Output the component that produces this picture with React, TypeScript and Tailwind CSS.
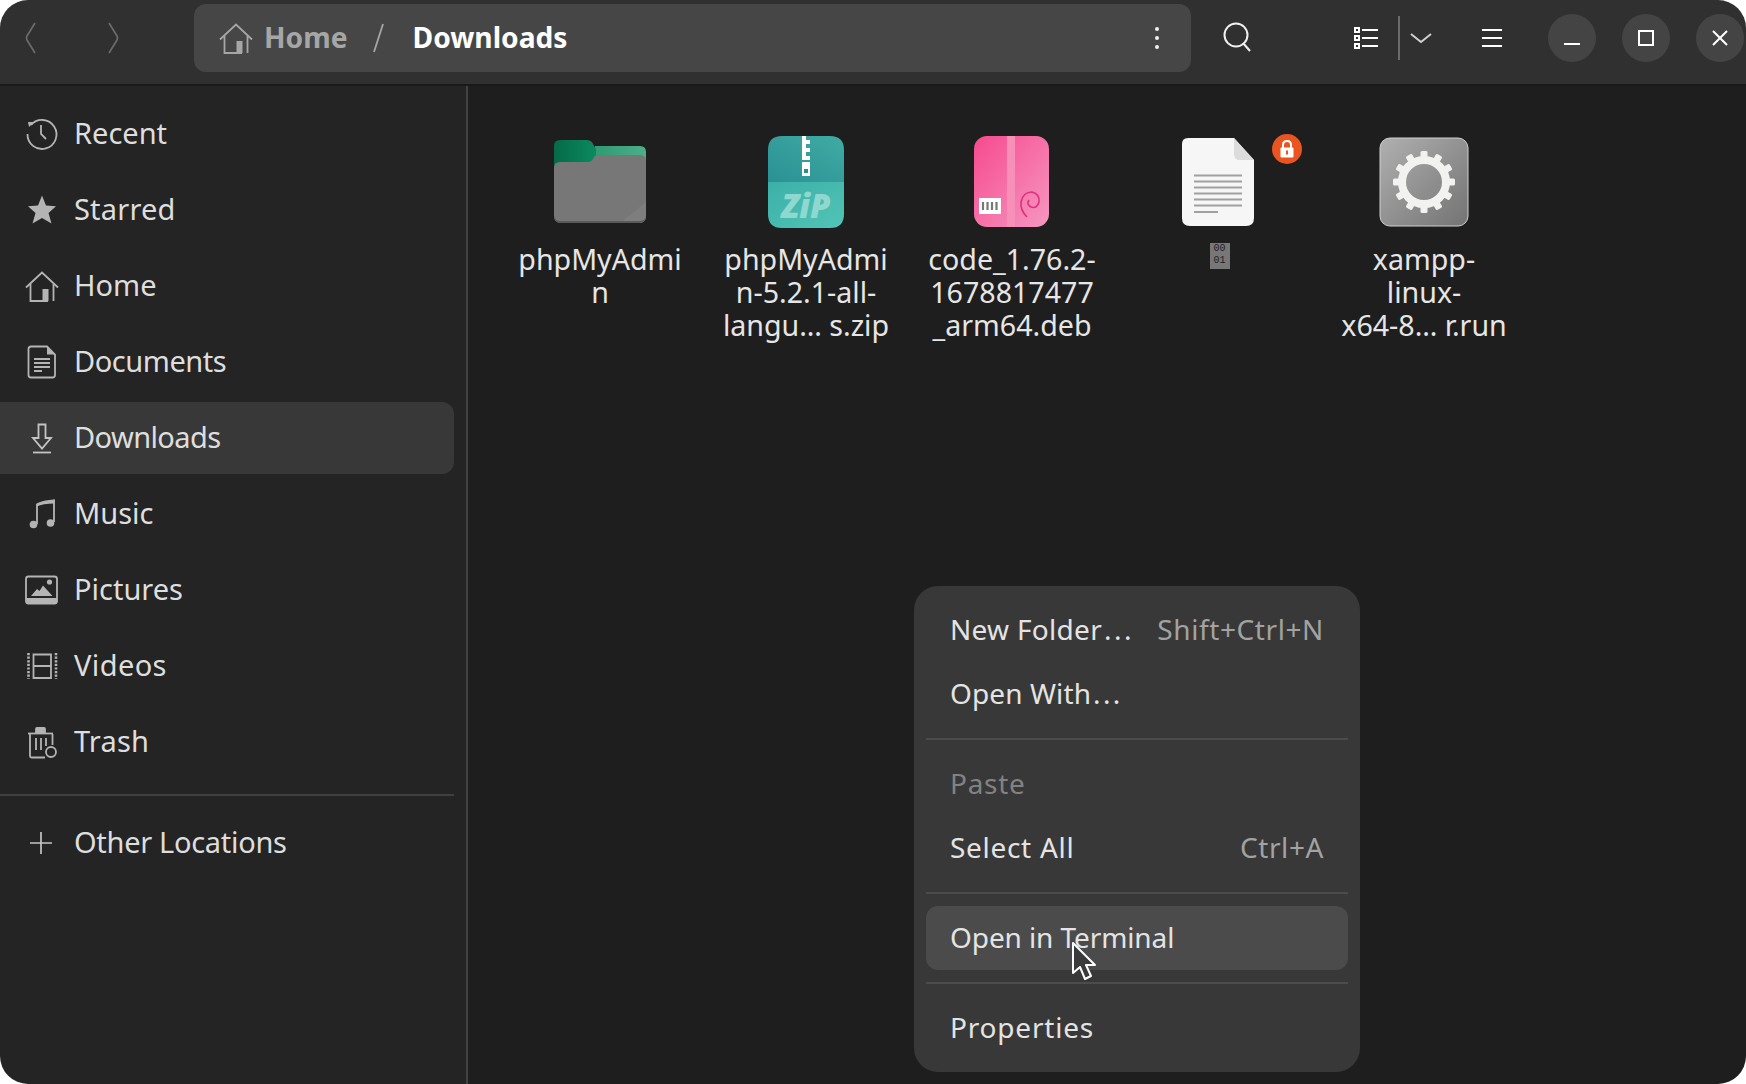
const font = { fontFamily: '"Noto Sans", sans-serif' };

const Recent = () => (
  <svg width="36" height="36" viewBox="0 0 36 36" fill="none" stroke="#b4b4b4" strokeWidth="1.8">
    <path d="M7 9 A14.5 14.5 0 1 1 3.5 18" />
    <path d="M4 6 L10 6 L5 11 Z" fill="#b4b4b4" stroke="none" />
    <path d="M17 9 V18 L22 23" />
  </svg>
);

const Star = () => (
  <svg width="36" height="36" viewBox="0 0 36 36" fill="#b4b4b4">
    <path d="M18 3.5 L22 13.5 L32 14.3 L24.5 21 L27.5 31.5 L18 26 L8.5 31.5 L11.5 21 L4 14.3 L14 13.5 Z" />
  </svg>
);

const HomeIcon = ({ color = "#b4b4b4" }: { color?: string }) => (
  <svg width="36" height="36" viewBox="0 0 36 36" fill="none" stroke={color} strokeWidth="1.8">
    <path d="M2 19.5 L18 4.5 L34 19.5" />
    <path d="M6.5 16 V33 H24 M29.5 16 V33" />
    <path d="M18.5 21 H24.5 V33 H18.5 Z" fill={color} stroke="none" />
  </svg>
);

const Documents = () => (
  <svg width="36" height="36" viewBox="0 0 36 36" fill="none" stroke="#b4b4b4" strokeWidth="1.8">
    <path d="M7 2.5 H23 L31 10.5 V31 Q31 33.5 28.5 33.5 H7 Q4.5 33.5 4.5 31 V5 Q4.5 2.5 7 2.5 Z" />
    <path d="M23 3 L30.5 10.5 H23 Z" fill="#b4b4b4" stroke="none" />
    <path d="M10 15 H26 M10 19 H26 M10 23 H26 M10 27 H18" />
  </svg>
);

const DownloadIcon = () => (
  <svg width="36" height="36" viewBox="0 0 36 36" fill="none" stroke="#c4c4c4" strokeWidth="1.8">
    <path d="M14.5 4.5 H21.5 V18 H27 L18 28.5 L9 18 H14.5 Z" />
    <path d="M9 32.5 H27" />
  </svg>
);

const MusicIcon = () => (
  <svg width="36" height="36" viewBox="0 0 36 36" fill="none" stroke="#b4b4b4" strokeWidth="1.8">
    <path d="M13 28 V8 M30 26 V3.5" />
    <path d="M12.5 7.5 Q19 4 30.5 3.5 V7.5 Q19 7.5 12.5 10.5 Z" fill="#b4b4b4" stroke="none" />
    <circle cx="9.5" cy="28.5" r="3.8" fill="#b4b4b4" stroke="none" />
    <circle cx="26.5" cy="27" r="3.8" fill="#b4b4b4" stroke="none" />
  </svg>
);

const PicturesIcon = () => (
  <svg width="36" height="36" viewBox="0 0 36 36" fill="none" stroke="#b4b4b4" strokeWidth="1.8">
    <rect x="2" y="4.5" width="31" height="27" rx="2.5" />
    <path d="M2 26 H33 V29 Q33 32 30 32 H5 Q2 32 2 29 Z" fill="#b4b4b4" stroke="none" />
    <path d="M7 24 L13 17 L15.5 19 L19 13.5 L28.5 24 Z" fill="#b4b4b4" stroke="none" />
    <circle cx="25.5" cy="10" r="2.6" fill="#b4b4b4" stroke="none" />
  </svg>
);

const VideosIcon = () => (
  <svg width="36" height="36" viewBox="0 0 36 36" fill="none" stroke="#b4b4b4" strokeWidth="1.8">
    <path d="M9.5 6.5 H27 V30 H9.5 Z M9.5 18 H27" />
    <path d="M4.5 5 V31 M32 5 V31" strokeWidth="2.6" strokeDasharray="2.2 1.4" />
  </svg>
);

const TrashIcon = () => (
  <svg width="36" height="36" viewBox="0 0 36 36" fill="none" stroke="#b4b4b4" strokeWidth="1.8">
    <path d="M4 9.5 H29" />
    <path d="M12 9 V5 Q12 4 13 4 H20 Q21 4 21 5 V9" fill="#b4b4b4" />
    <path d="M6 10 V32 Q6 33.5 7.5 33.5 H21 M28.5 10 V21" />
    <path d="M12 14 V26 M17 14 V26 M22 14 V22" />
    <circle cx="27" cy="28" r="5" />
  </svg>
);

const PlusIcon = () => (
  <svg width="36" height="36" viewBox="0 0 36 36" fill="none" stroke="#c4c4c4" strokeWidth="1.7">
    <path d="M6 18 H28 M17 7 V29" />
  </svg>
);

const Back = ({ flip }: { flip?: boolean }) => (
  <svg width="12" height="32" viewBox="0 0 12 32" fill="none" stroke="#6b6b6b" strokeWidth="1.7">
    <path d={flip ? "M2 1 L10 14 Q11 16 10 18 L2 31" : "M10 1 L2 14 Q1 16 2 18 L10 31"} />
  </svg>
);

const Sidebar = () => {
  const items = [
    { label: "Recent", icon: <Recent /> },
    { label: "Starred", icon: <Star />, tracking: "tracking-[0.2px]" },
    { label: "Home", icon: <HomeIcon /> },
    { label: "Documents", icon: <Documents />, tracking: "tracking-[-0.45px]" },
    { label: "Downloads", icon: <DownloadIcon />, tracking: "tracking-[-0.6px]", active: true },
    { label: "Music", icon: <MusicIcon /> },
    { label: "Pictures", icon: <PicturesIcon /> },
    { label: "Videos", icon: <VideosIcon />, tracking: "tracking-[0.4px]" },
    { label: "Trash", icon: <TrashIcon />, tracking: "tracking-[0.2px]" },
  ];

  return (
    <aside className="w-[468px] shrink-0 bg-[#242424] border-r-2 border-[#424242] pt-3 pr-3">
      <div className="flex flex-col gap-1">
        {items.map((item) => (
          <div
            key={item.label}
            className={`h-[72px] flex items-center gap-[14px] pl-6 rounded-r-xl text-[29px] text-[#dedede] ${
              item.active ? "bg-[#383838]" : ""
            }`}
          >
            {item.icon}
            <span className={`-mt-0.5 ${item.tracking ?? ""}`}>{item.label}</span>
          </div>
        ))}
      </div>
      <div className="h-0.5 bg-[#404040] mt-4 mb-[11px]" />
      <div className="h-[72px] flex items-center gap-[14px] pl-6 text-[29px] text-[#dedede]">
        <PlusIcon />
        <span className="-mt-0.5 tracking-[-0.3px]">Other Locations</span>
      </div>
    </aside>
  );
};

const FolderFile = () => (
  <svg width="100" height="100" viewBox="0 0 100 100">
    <defs>
      <linearGradient id="folderTab" x1="0" y1="0" x2="1" y2="0">
        <stop offset="0" stopColor="#056a48" />
        <stop offset="1" stopColor="#0b8a60" />
      </linearGradient>
      <linearGradient id="folderBack" x1="0" y1="0" x2="1" y2="0">
        <stop offset="0" stopColor="#2f9a74" />
        <stop offset="1" stopColor="#4cae8b" />
      </linearGradient>
    </defs>
    <path d="M45 16 H90 Q96 16 96 22 V40 H45 Z" fill="url(#folderBack)" />
    <path d="M4 16 Q4 10 10 10 H37 Q42 10 44 16 L46 19 V40 H4 Z" fill="url(#folderTab)" />
    <path d="M4 38 Q4 32 10 32 H38 Q42 32 44 27 Q45 25 48 25 H90 Q96 25 96 31 V86 Q96 93 89 93 H11 Q4 93 4 86 Z" fill="#777777" />
    <path d="M96 72 V86 Q96 93 89 93 H70 Z" fill="#7e7e7e" />
    <path d="M4 85 V86 Q4 93 11 93 H89 Q96 93 96 86 V85 Q96 91 89 91 H11 Q4 91 4 85 Z" fill="#5a5a5a" />
  </svg>
);

const ZipFile = () => (
  <svg width="100" height="100" viewBox="0 0 100 100">
    <defs>
      <linearGradient id="zipTop" x1="0" y1="1" x2="1" y2="0">
        <stop offset="0" stopColor="#2a9194" />
        <stop offset="1" stopColor="#40aba4" />
      </linearGradient>
      <linearGradient id="zipBottom" x1="0" y1="0" x2="1" y2="1">
        <stop offset="0" stopColor="#3cb0a8" />
        <stop offset="1" stopColor="#52c4b6" />
      </linearGradient>
    </defs>
    <path d="M12 20 Q12 6 26 6 H74 Q88 6 88 20 V52 H12 Z" fill="url(#zipTop)" />
    <path d="M12 52 H88 V84 Q88 98 74 98 H26 Q12 98 12 84 Z" fill="url(#zipBottom)" />
    <path d="M46 6 H50 V10 H54 V14 H50 V18 H46 Z M46 22 H50 V26 H54 V30 H46 Z" fill="#ffffff" />
    <path d="M46 18 H54 V22 H46 Z" fill="#ffffff" />
    <rect x="46" y="32" width="8" height="14" fill="#ffffff" />
    <rect x="48" y="39" width="4" height="4" fill="#2a8f92" />
    <text x="50" y="88" textAnchor="middle" fontFamily="Noto Sans, sans-serif" fontStyle="italic" fontWeight="900" fontSize="33" fill="#8fd8cf">
      ZiP
    </text>
  </svg>
);

const DebFile = () => (
  <svg width="100" height="100" viewBox="0 0 100 100">
    <defs>
      <linearGradient id="debBody" x1="0" y1="0" x2="1" y2="1">
        <stop offset="0" stopColor="#f74a8e" />
        <stop offset="1" stopColor="#f597c0" />
      </linearGradient>
    </defs>
    <rect x="12" y="6" width="75" height="91" rx="13" fill="url(#debBody)" />
    <rect x="45" y="6" width="8" height="91" fill="#f790b8" />
    <rect x="17" y="68" width="22" height="16" fill="#ffffff" />
    <path d="M21 72 V80 M25.5 72 V80 M30 72 V80 M34.5 72 V80" stroke="#777777" strokeWidth="2.2" />
    <path d="M65 87 Q58 80 59 72 Q61 62 70 62 Q78 64 77 72 Q75 79 69 77 Q64 74 67 70" fill="none" stroke="#df2f7d" strokeWidth="1.6" />
  </svg>
);

const DocFile = () => (
  <svg width="100" height="100" viewBox="0 0 100 100">
    <path d="M20 8 H66 L86 30 V88 Q86 96 78 96 H22 Q14 96 14 88 V14 Q14 8 20 8 Z" fill="#f6f6f6" />
    <path d="M66 8 L86 30 H72 Q66 30 66 24 Z" fill="#dcdcdc" />
    <path d="M26 45.5 H74 M26 51.5 H74 M26 57.5 H74 M26 63.5 H74 M26 69.5 H74 M26 75.5 H74 M26 82 H50" stroke="#a0a0a0" strokeWidth="2" />
  </svg>
);

const RunFile = () => {
  const teeth = Array.from({ length: 12 }, (_, i) => i * 30);
  return (
    <svg width="100" height="100" viewBox="0 0 100 100">
      <defs>
        <linearGradient id="runBody" x1="0" y1="0" x2="1" y2="1">
          <stop offset="0" stopColor="#b0b0b0" />
          <stop offset="1" stopColor="#737373" />
        </linearGradient>
      </defs>
      <rect x="6" y="8" width="88" height="88" rx="10" fill="url(#runBody)" stroke="#cfcfcf" strokeWidth="1" />
      <circle cx="50" cy="52" r="22" fill="none" stroke="#f2f2f0" strokeWidth="8" />
      {teeth.map((deg) => (
        <rect key={deg} x="46.5" y="21" width="7" height="9" rx="1.5" fill="#f2f2f0" transform={`rotate(${deg} 50 52)`} />
      ))}
    </svg>
  );
};

const LockBadge = () => (
  <div className="absolute left-[157px] top-[4px] w-[30px] h-[30px] rounded-full bg-[#e95420] flex items-center justify-center">
    <svg width="16" height="20" viewBox="0 0 16 20">
      <path d="M4 9 V6 Q4 2 8 2 Q12 2 12 6 V9" fill="none" stroke="#ffffff" strokeWidth="2" />
      <rect x="1.5" y="8.5" width="13" height="10" rx="1" fill="#ffffff" />
      <rect x="7" y="11.5" width="2" height="4" fill="#e95420" />
    </svg>
  </div>
);

const files = [
  { icon: <FolderFile />, lines: ["phpMyAdmi", "n"] },
  { icon: <ZipFile />, lines: ["phpMyAdmi", "n-5.2.1-all-", "langu… s.zip"] },
  { icon: <DebFile />, lines: ["code_1.76.2-", "1678817477", "_arm64.deb"] },
  { icon: <DocFile />, lines: [], badge: true, tofu: true },
  { icon: <RunFile />, lines: ["xampp-", "linux-", "x64-8… r.run"] },
];

const FileGrid = () => (
  <main className="flex-1 bg-[#1e1e1e] pt-11 pl-[29px]">
    <div className="flex">
      {files.map((file, i) => (
        <div key={i} className="w-[206px] relative flex flex-col items-center">
          {file.icon}
          {file.badge && <LockBadge />}
          <div className="mt-3 text-[28.6px] leading-[33px] text-[#e6e6e6] text-center whitespace-nowrap">
            {file.lines.map((line) => (
              <div key={line}>{line}</div>
            ))}
            {file.tofu && (
              <div className="mt-px ml-[3px] w-5 h-[26px] bg-[#777777] text-[#222222] font-['Liberation_Mono'] text-[10px] leading-[12px] text-center">
                00
                <br />
                01
              </div>
            )}
          </div>
        </div>
      ))}
    </div>
  </main>
);

const Header = () => (
  <header className="h-[86px] shrink-0 bg-[#303030] border-b-2 border-[#1a1a1a] flex items-center pb-2 text-white">
    <div className="w-[62px] flex justify-center">
      <Back />
    </div>
    <div className="ml-5 w-[61px] flex justify-center">
      <Back flip />
    </div>
    <div className="ml-[51px] w-[997px] h-[68px] rounded-xl bg-[#464646] flex items-center pl-6 pr-[31px]">
      <HomeIcon color="#a6a6a6" />
      <span className="ml-2.5 -mt-0.5 text-[28.2px] font-bold text-[#a6a6a6]">Home</span>
      <svg className="ml-[23px]" width="14" height="32" viewBox="0 0 14 32" fill="none" stroke="#a6a6a6" strokeWidth="1.8">
        <path d="M12 2 L3 30" />
      </svg>
      <span className="ml-7 -mt-0.5 text-[28.2px] font-bold text-white">Downloads</span>
      <svg className="ml-auto" width="6" height="24" viewBox="0 0 6 24" fill="#f0f0f0">
        <circle cx="3" cy="3" r="2" />
        <circle cx="3" cy="12" r="2" />
        <circle cx="3" cy="21" r="2" />
      </svg>
    </div>
    <div className="ml-4 w-[60px] flex justify-center">
      <svg width="32" height="32" viewBox="0 0 32 32" fill="none" stroke="#f0f0f0" strokeWidth="2">
        <circle cx="15" cy="13" r="11.5" />
        <path d="M22 21 L29 29" />
      </svg>
    </div>
    <div className="ml-[69px] w-[60px] flex justify-center">
      <svg width="26" height="24" viewBox="0 0 26 24" fill="none" stroke="#ffffff" strokeWidth="2">
        <path d="M2 2 H6 V6 H2 Z M2 10 H6 V14 H2 Z M2 18 H6 V22 H2 Z" />
        <path d="M9 4 H25 M9 12 H25 M9 20 H25" />
      </svg>
    </div>
    <div className="ml-0.5 w-0.5 h-11 bg-[#6b6b6b]" />
    <div className="ml-px w-10 flex justify-center">
      <svg width="22" height="12" viewBox="0 0 22 12" fill="none" stroke="#d0d0d0" strokeWidth="2">
        <path d="M1 2 L11 10 L21 2" />
      </svg>
    </div>
    <div className="ml-[21px] w-[60px] flex justify-center">
      <svg width="22" height="20" viewBox="0 0 22 20" fill="none" stroke="#ffffff" strokeWidth="2">
        <path d="M1 2 H21 M1 10 H21 M1 18 H21" />
      </svg>
    </div>
    <div className="ml-[26px] w-12 h-12 rounded-full bg-[#444444] flex items-center justify-center">
      <svg width="18" height="18" viewBox="0 0 18 18" fill="none" stroke="#ffffff" strokeWidth="2">
        <path d="M1 15 H17" />
      </svg>
    </div>
    <div className="ml-[26px] w-12 h-12 rounded-full bg-[#444444] flex items-center justify-center">
      <svg width="18" height="18" viewBox="0 0 18 18" fill="none" stroke="#ffffff" strokeWidth="2">
        <rect x="2" y="2" width="14" height="14" />
      </svg>
    </div>
    <div className="ml-[26px] w-12 h-12 rounded-full bg-[#444444] flex items-center justify-center">
      <svg width="18" height="18" viewBox="0 0 18 18" fill="none" stroke="#ffffff" strokeWidth="2">
        <path d="M2 2 L16 16 M16 2 L2 16" />
      </svg>
    </div>
  </header>
);

type MenuItemProps = {
  label: string;
  dots?: boolean;
  hint?: string;
  disabled?: boolean;
  hover?: boolean;
  tracking?: string;
};

const MenuItem = ({ label, dots, hint, disabled, hover, tracking }: MenuItemProps) => (
  <div
    className={`h-16 flex items-center justify-between pl-6 pr-6 pb-0.5 rounded-xl ${hover ? "bg-[#4b4b4b]" : ""} ${
      disabled ? "text-[#828282]" : "text-[#e4e4e4]"
    }`}
  >
    <span className={tracking}>
      {label}
      {dots && <span className="ml-[2px] tracking-[2.4px]">...</span>}
    </span>
    {hint && <span className="text-[#a2a2a2] tracking-[0.6px]">{hint}</span>}
  </div>
);

const Sep = () => <div className="h-0.5 bg-[#4c4c4c] my-3" />;

const ContextMenu = () => (
  <div className="absolute left-[914px] top-[586px] w-[446px] h-[486px] rounded-3xl bg-[#383838] p-3 text-[28px]">
    <MenuItem label="New Folder" dots hint="Shift+Ctrl+N" tracking="tracking-[0.3px]" />
    <MenuItem label="Open With" dots tracking="tracking-[0.1px]" />
    <Sep />
    <MenuItem label="Paste" disabled tracking="tracking-[0.7px]" />
    <MenuItem label="Select All" hint="Ctrl+A" tracking="tracking-[0.7px]" />
    <Sep />
    <MenuItem label="Open in Terminal" hover tracking="tracking-[-0.1px]" />
    <Sep />
    <MenuItem label="Properties" tracking="tracking-[0.8px]" />
  </div>
);

const Cursor = () => (
  <svg className="absolute left-[1071px] top-[941px]" width="28" height="42" viewBox="0 0 28 42">
    <path d="M2 2 V32 L9 26 L14 38 L20 35 L15 24 L24 24 Z" fill="#3a3a3a" stroke="#ffffff" strokeWidth="2" strokeLinejoin="round" />
  </svg>
);

export default function App() {
  return (
    <div className="w-[1746px] h-[1084px] bg-white" style={font}>
      <div className="relative w-full h-full rounded-[28px] overflow-hidden flex flex-col">
        <Header />
        <div className="flex flex-1 min-h-0">
          <Sidebar />
          <FileGrid />
        </div>
        <ContextMenu />
        <Cursor />
      </div>
    </div>
  );
}
